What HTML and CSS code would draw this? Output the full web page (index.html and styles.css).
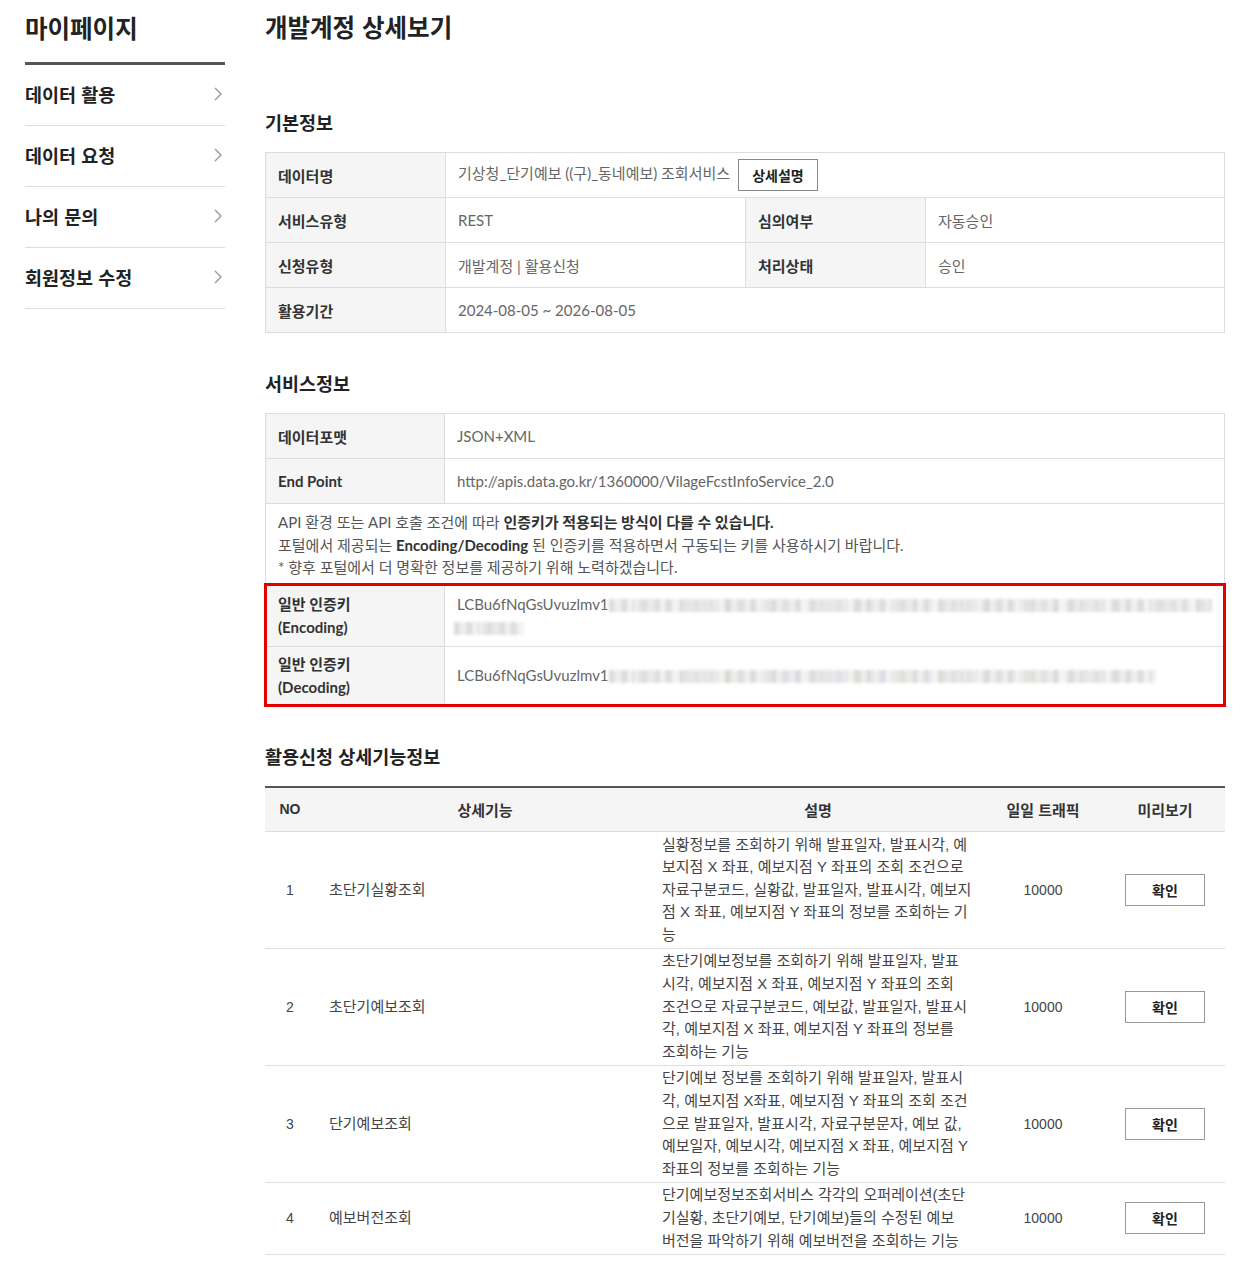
FILE: index.html
```html
<!DOCTYPE html>
<html lang="ko">
<head>
<meta charset="utf-8">
<title>개발계정 상세보기</title>
<link rel="stylesheet" href="styles.css">
</head>
<body>
<div class="page">
  <aside class="side">
    <h2 class="side-title">마이페이지</h2>
    <ul class="side-menu">
      <li><a href="#">데이터 활용<svg class="chev" viewBox="0 0 8 14"><polyline points="1,1 7,7 1,13"/></svg></a></li>
      <li><a href="#">데이터 요청<svg class="chev" viewBox="0 0 8 14"><polyline points="1,1 7,7 1,13"/></svg></a></li>
      <li><a href="#">나의 문의<svg class="chev" viewBox="0 0 8 14"><polyline points="1,1 7,7 1,13"/></svg></a></li>
      <li><a href="#">회원정보 수정<svg class="chev" viewBox="0 0 8 14"><polyline points="1,1 7,7 1,13"/></svg></a></li>
    </ul>
  </aside>

  <main class="content">
    <h1 class="page-title">개발계정 상세보기</h1>

    <h2 class="sec-title sec-first">기본정보</h2>
    <table class="info">
      <colgroup><col class="c-th"><col class="c-val"><col class="c-th"><col></colgroup>
      <tr>
        <th>데이터명</th>
        <td colspan="3">기상청_단기예보 ((구)_동네예보) 조회서비스 <button class="btn-detail">상세설명</button></td>
      </tr>
      <tr>
        <th>서비스유형</th>
        <td>REST</td>
        <th>심의여부</th>
        <td>자동승인</td>
      </tr>
      <tr>
        <th>신청유형</th>
        <td>개발계정 | 활용신청</td>
        <th>처리상태</th>
        <td>승인</td>
      </tr>
      <tr>
        <th>활용기간</th>
        <td colspan="3">2024-08-05 ~ 2026-08-05</td>
      </tr>
    </table>

    <h2 class="sec-title">서비스정보</h2>
    <div class="svc">
      <div class="svc-row">
        <div class="svc-th">데이터포맷</div>
        <div class="svc-td">JSON+XML</div>
      </div>
      <div class="svc-row">
        <div class="svc-th">End Point</div>
        <div class="svc-td">http://apis.data.go.kr/1360000/VilageFcstInfoService_2.0</div>
      </div>
      <div class="svc-note">
        <p>API 환경 또는 API 호출 조건에 따라 <b>인증키가 적용되는 방식이 다를 수 있습니다.</b></p>
        <p>포털에서 제공되는 <b>Encoding/Decoding</b> 된 인증키를 적용하면서 구동되는 키를 사용하시기 바랍니다.</p>
        <p>* 향후 포털에서 더 명확한 정보를 제공하기 위해 노력하겠습니다.</p>
      </div>
      <div class="keys">
        <div class="svc-row key-row">
          <div class="svc-th">일반 인증키<br>(Encoding)</div>
          <div class="svc-td"><div class="key">LCBu6fNqGsUvuzlmv1<span class="blur blur-a"></span><span class="blur blur-b"></span></div></div>
        </div>
        <div class="svc-row key-row">
          <div class="svc-th">일반 인증키<br>(Decoding)</div>
          <div class="svc-td"><div class="key">LCBu6fNqGsUvuzlmv1<span class="blur blur-c"></span></div></div>
        </div>
      </div>
    </div>

    <h2 class="sec-title">활용신청 상세기능정보</h2>
    <table class="func">
      <colgroup><col class="f-no"><col class="f-name"><col class="f-desc"><col class="f-traffic"><col></colgroup>
      <thead>
        <tr><th class="no">NO</th><th>상세기능</th><th>설명</th><th>일일 트래픽</th><th>미리보기</th></tr>
      </thead>
      <tbody>
        <tr>
          <td class="num">1</td>
          <td class="name">초단기실황조회</td>
          <td class="desc">실황정보를 조회하기 위해 발표일자, 발표시각, 예<br>보지점 X 좌표, 예보지점 Y 좌표의 조회 조건으로<br>자료구분코드, 실황값, 발표일자, 발표시각, 예보지<br>점 X 좌표, 예보지점 Y 좌표의 정보를 조회하는 기<br>능</td>
          <td class="num">10000</td>
          <td><button class="btn">확인</button></td>
        </tr>
        <tr>
          <td class="num">2</td>
          <td class="name">초단기예보조회</td>
          <td class="desc">초단기예보정보를 조회하기 위해 발표일자, 발표<br>시각, 예보지점 X 좌표, 예보지점 Y 좌표의 조회<br>조건으로 자료구분코드, 예보값, 발표일자, 발표시<br>각, 예보지점 X 좌표, 예보지점 Y 좌표의 정보를<br>조회하는 기능</td>
          <td class="num">10000</td>
          <td><button class="btn">확인</button></td>
        </tr>
        <tr>
          <td class="num">3</td>
          <td class="name">단기예보조회</td>
          <td class="desc">단기예보 정보를 조회하기 위해 발표일자, 발표시<br>각, 예보지점 X좌표, 예보지점 Y 좌표의 조회 조건<br>으로 발표일자, 발표시각, 자료구분문자, 예보 값,<br>예보일자, 예보시각, 예보지점 X 좌표, 예보지점 Y<br>좌표의 정보를 조회하는 기능</td>
          <td class="num">10000</td>
          <td><button class="btn">확인</button></td>
        </tr>
        <tr>
          <td class="num">4</td>
          <td class="name">예보버전조회</td>
          <td class="desc">단기예보정보조회서비스 각각의 오퍼레이션(초단<br>기실황, 초단기예보, 단기예보)들의 수정된 예보<br>버전을 파악하기 위해 예보버전을 조회하는 기능</td>
          <td class="num">10000</td>
          <td><button class="btn">확인</button></td>
        </tr>
      </tbody>
    </table>
  </main>
</div>
</body>
</html>
```

FILE: styles.css
```css
* { box-sizing: border-box; }

body {
  margin: 0;
  background: #fff;
  color: #333;
  font-family: "Noto Sans CJK KR", sans-serif;
}

.page {
  display: flex;
  align-items: flex-start;
  gap: 40px;
  padding-left: 25px;
}

/* sidebar */
.side { width: 200px; flex: none; }

.side-title {
  margin: 0;
  padding: 12px 0 18px;
  font-size: 24.5px;
  line-height: 32px;
  font-weight: 700;
  color: #222;
  border-bottom: 3px solid #555;
}

.side-menu { list-style: none; margin: 0; padding: 0; }
.side-menu li { border-bottom: 1px solid #ddd; }

.side-menu a {
  display: flex;
  align-items: center;
  justify-content: space-between;
  height: 60px;
  padding-right: 3px;
  padding-bottom: 2px;
  font-size: 18.5px;
  font-weight: 700;
  color: #222;
  text-decoration: none;
}

.chev { width: 8px; height: 14px; fill: none; stroke: #999; stroke-width: 1.4; }

/* content */
.content { width: 960px; flex: none; }

.page-title {
  margin: 0;
  padding-top: 11px;
  font-size: 24.5px;
  line-height: 32px;
  font-weight: 700;
  color: #222;
}

.sec-title {
  margin: 38px 0 18px;
  font-size: 18.5px;
  line-height: 24px;
  font-weight: 700;
  color: #222;
}
.sec-first { margin-top: 67px; }

/* basic info table */
.info {
  width: 100%;
  border-collapse: collapse;
  table-layout: fixed;
  font-family: "Lato", "Noto Sans CJK KR", sans-serif;
  font-size: 15px;
}
.info .c-th { width: 180px; }
.info .c-val { width: 300px; }
.info th, .info td {
  border: 1px solid #ddd;
  height: 45px;
  padding: 0 12px;
  text-align: left;
  vertical-align: middle;
}
.info th { background: #f5f5f5; color: #333; font-weight: 700; }
.info td { color: #666; }

.btn-detail {
  width: 80px;
  height: 32px;
  margin-left: 4px;
  border: 1px solid #888;
  background: #fff;
  color: #222;
  font: 700 14px "Noto Sans CJK KR", sans-serif;
  vertical-align: middle;
}

/* service info */
.svc {
  border: 1px solid #ddd;
  font-family: "Lato", "Noto Sans CJK KR", sans-serif;
  font-size: 15px;
}
.svc-row {
  display: grid;
  grid-template-columns: 179px 1fr;
  border-top: 1px solid #ddd;
}
.svc-row:first-child { border-top: 0; }
.svc-th {
  display: flex;
  align-items: center;
  min-height: 44px;
  padding: 0 12px;
  background: #f5f5f5;
  border-right: 1px solid #ddd;
  color: #333;
  font-weight: 700;
}
.svc-td {
  display: flex;
  align-items: center;
  padding: 0 12px;
  color: #666;
}

.svc-note {
  border-top: 1px solid #ddd;
  padding: 7px 12px 6px;
  color: #555;
  line-height: 22.5px;
}
.svc-note p { margin: 0; }
.svc-note b { color: #333; }

.keys {
  position: relative;
  z-index: 1;
  border-top: 1px solid #ddd;
  outline: 3px solid #e50000;
  outline-offset: -1px;
}
.keys .svc-row:first-child { border-top: 0; }
.key-row .svc-th { padding: 6px 12px; line-height: 23px; }
.key-row .svc-td { line-height: 23px; padding-top: 7px; padding-bottom: 7px; }

.blur {
  display: inline-block;
  height: 13px;
  vertical-align: -2px;
  background:
    repeating-linear-gradient(90deg,
      rgba(0,0,0,0.05) 0 4px, transparent 4px 11px, rgba(0,0,0,0.035) 11px 17px,
      transparent 17px 23px, rgba(0,0,0,0.07) 23px 26px, transparent 26px 34px,
      rgba(60,80,120,0.05) 34px 41px, transparent 41px 47px),
    repeating-linear-gradient(90deg,
      #e6e6e6 0 7px, #f0f0f0 7px 13px, #e1e4e8 13px 19px, #f3f3f3 19px 29px,
      #e6e3df 29px 37px, #eeeeee 37px 43px);
  filter: blur(1.4px);
}
.blur-a { width: 603px; }
.blur-b { width: 70px; margin-left: -3px; }
.blur-c { width: 546px; }

/* function table */
.func {
  width: 100%;
  border-collapse: collapse;
  table-layout: fixed;
  border-top: 2px solid #555;
  font-family: "Liberation Sans", "Noto Sans CJK KR", sans-serif;
  font-size: 15px;
}
.func .f-no { width: 50px; }
.func .f-name { width: 340px; }
.func .f-desc { width: 326px; }
.func .f-traffic { width: 124px; }

.func th {
  height: 45px;
  background: #f5f5f5;
  border-bottom: 1px solid #ddd;
  color: #333;
  font-weight: 700;
  text-align: center;
}
.func th.no { font-size: 14px; }
.func td {
  padding: 1.5px 7px;
  border-bottom: 1px solid #ddd;
  line-height: 22.6px;
  color: #444;
  text-align: center;
  vertical-align: middle;
}
.func td.num { font-size: 14px; }
.func td.name { text-align: left; padding-left: 14px; }
.func td.desc { text-align: left; white-space: nowrap; }

.btn {
  width: 80px;
  height: 32px;
  border: 1px solid #999;
  background: #fff;
  color: #222;
  font: 700 14px "Noto Sans CJK KR", sans-serif;
  vertical-align: middle;
}
```
